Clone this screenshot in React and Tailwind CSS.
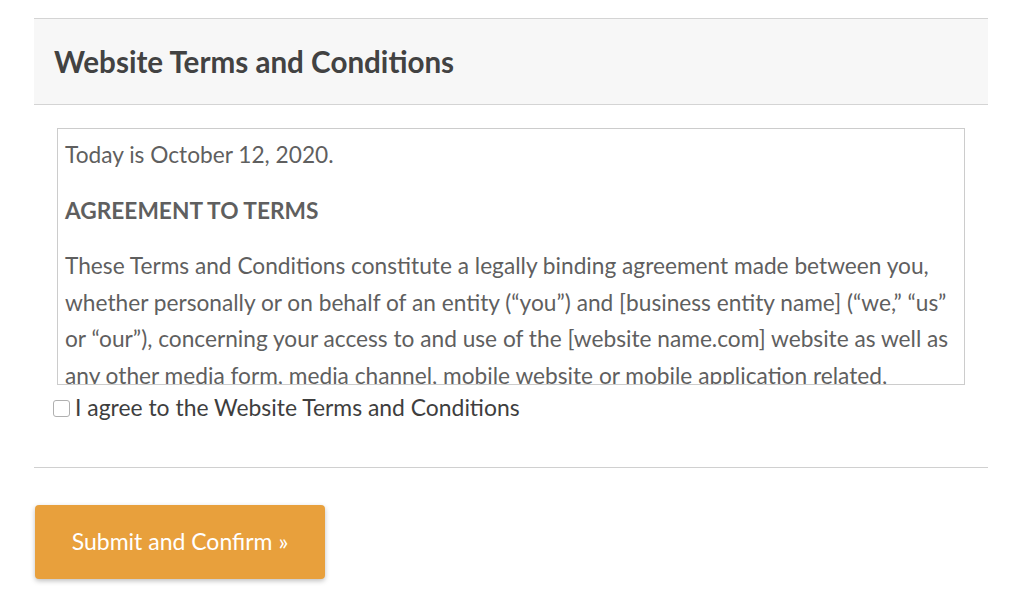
import { useState } from "react";

const paragraphs = [
  "These Terms and Conditions constitute a legally binding agreement made between you, whether personally or on behalf of an entity (“you”) and [business entity name] (“we,” “us” or “our”), concerning your access to and use of the [website name.com] website as well as any other media form, media channel, mobile website or mobile application related, linked, or otherwise connected thereto (collectively, the “Site”).",
  "You agree that by accessing the Site, you have read, understood, and agree to be bound by all of these Terms and Conditions.",
];

export default function App() {
  const [agreed, setAgreed] = useState(false);

  return (
    <div className="min-h-[609px] bg-white font-['Lato','Noto_Sans',sans-serif]">
      <div className="ml-[34px] w-[954px] pt-[18px]">
        {/* Header */}
        <div className="h-[87px] border-y border-[#d4d4d4] bg-[#f7f7f7] pl-5 pt-[2px] flex items-center">
          <h2 className="text-[29.6px] font-bold text-[#424242]">
            Website Terms and Conditions
          </h2>
        </div>

        {/* Terms scroll box */}
        <div className="ml-[23px] mt-[23px] w-[908px] h-[257px] overflow-hidden border border-[#cccccc] px-[7px] pt-[8px] text-[22.7px] leading-[36.5px] text-[#5f5f5f]">
          <p>Today is October 12, 2020.</p>
          <p className="mt-[19px] font-bold">AGREEMENT TO TERMS</p>
          {paragraphs.map((p, i) => (
            <p key={i} className="mt-[19px]">
              {p}
            </p>
          ))}
        </div>

        {/* Agree checkbox */}
        <label className="ml-[19px] mt-[7px] flex items-center gap-[5px] text-[22.9px] leading-[30px] text-[#3e3e3e] cursor-pointer">
          <input
            type="checkbox"
            checked={agreed}
            onChange={(e) => setAgreed(e.target.checked)}
            className="appearance-none w-[17px] h-[17px] rounded-[3px] border border-[#b0b0b0] bg-white mt-[2px]"
          />
          I agree to the Website Terms and Conditions
        </label>

        <div className="mt-[45px] border-t border-[#d0d0d0]" />

        {/* Submit */}
        <button className="ml-[1px] mt-[37px] w-[290px] h-[74px] rounded-[4px] bg-[#e8a03c] text-white text-[23px] shadow-[0_2px_5px_rgba(0,0,0,0.25)] pb-[2px]">
          Submit and Confirm »
        </button>
      </div>
    </div>
  );
}
